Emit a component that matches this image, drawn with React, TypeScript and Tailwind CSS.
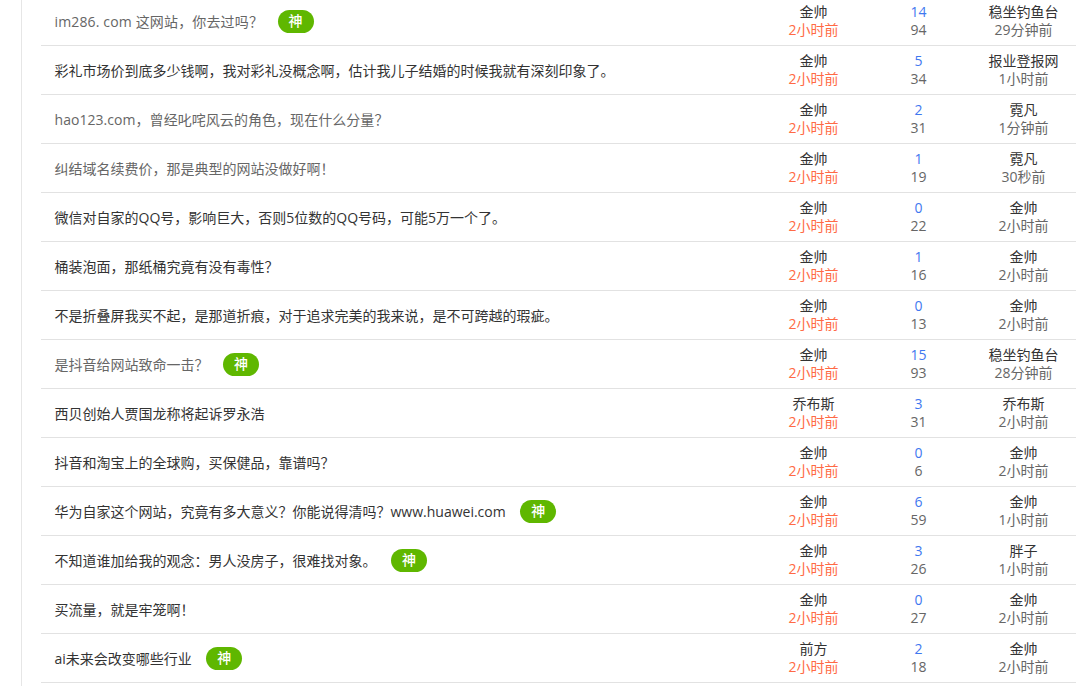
import React from "react";

interface Topic {
  title: string;
  muted?: boolean;
  hot?: boolean;
  spacing?: string;
  author: string;
  replies: number;
  views: number;
  lastUser: string;
  lastTime: string;
}

const topics: Topic[] = [
  { title: "im286. com 这网站，你去过吗？", muted: true, hot: true, spacing: "tracking-[0.15px]", author: "金帅", replies: 14, views: 94, lastUser: "稳坐钓鱼台", lastTime: "29分钟前" },
  { title: "彩礼市场价到底多少钱啊，我对彩礼没概念啊，估计我儿子结婚的时候我就有深刻印象了。", author: "金帅", replies: 5, views: 34, lastUser: "报业登报网", lastTime: "1小时前" },
  { title: "hao123.com，曾经叱咤风云的角色，现在什么分量？", muted: true, spacing: "tracking-[0.05px]", author: "金帅", replies: 2, views: 31, lastUser: "霓凡", lastTime: "1分钟前" },
  { title: "纠结域名续费价，那是典型的网站没做好啊！", muted: true, author: "金帅", replies: 1, views: 19, lastUser: "霓凡", lastTime: "30秒前" },
  { title: "微信对自家的QQ号，影响巨大，否则5位数的QQ号码，可能5万一个了。", author: "金帅", replies: 0, views: 22, lastUser: "金帅", lastTime: "2小时前" },
  { title: "桶装泡面，那纸桶究竟有没有毒性？", author: "金帅", replies: 1, views: 16, lastUser: "金帅", lastTime: "2小时前" },
  { title: "不是折叠屏我买不起，是那道折痕，对于追求完美的我来说，是不可跨越的瑕疵。", author: "金帅", replies: 0, views: 13, lastUser: "金帅", lastTime: "2小时前" },
  { title: "是抖音给网站致命一击？", muted: true, hot: true, author: "金帅", replies: 15, views: 93, lastUser: "稳坐钓鱼台", lastTime: "28分钟前" },
  { title: "西贝创始人贾国龙称将起诉罗永浩", author: "乔布斯", replies: 3, views: 31, lastUser: "乔布斯", lastTime: "2小时前" },
  { title: "抖音和淘宝上的全球购，买保健品，靠谱吗？", author: "金帅", replies: 0, views: 6, lastUser: "金帅", lastTime: "2小时前" },
  { title: "华为自家这个网站，究竟有多大意义？你能说得清吗？www.huawei.com", hot: true, author: "金帅", replies: 6, views: 59, lastUser: "金帅", lastTime: "1小时前" },
  { title: "不知道谁加给我的观念：男人没房子，很难找对象。", hot: true, author: "金帅", replies: 3, views: 26, lastUser: "胖子", lastTime: "1小时前" },
  { title: "买流量，就是牢笼啊！", author: "金帅", replies: 0, views: 27, lastUser: "金帅", lastTime: "2小时前" },
  { title: "ai未来会改变哪些行业", hot: true, author: "前方", replies: 2, views: 18, lastUser: "金帅", lastTime: "2小时前" },
];

const App: React.FC = () => {
  return (
    <div className="h-[686px] overflow-hidden bg-white font-['Open_Sans','Noto_Sans_CJK_SC',sans-serif] text-sm leading-[18px] text-[#333]">
      <div className="ml-[21px] w-[1055px] h-[700px] border-l border-[#e6e6e6] pl-[19px] -mt-[3px]">
        {topics.map((topic, index) => (
          <div key={index} className="h-[49px] flex items-center border-b border-[#e2e2e2]">
            <div className="flex-1 pl-[13.5px] flex items-center">
              <span className={`pt-[2px] ${topic.muted ? "text-[#666]" : "text-[#333]"} ${topic.spacing ?? ""}`}>{topic.title}</span>
              {topic.hot ? (
                <span className="ml-[14.5px] w-9 h-[23px] rounded-full bg-[#5fb700] text-white text-sm font-medium flex items-center justify-center">
                  神
                </span>
              ) : null}
            </div>
            <div className="w-[105px] text-center">
              <div>{topic.author}</div>
              <div className="text-[#ff6a45]">2小时前</div>
            </div>
            <div className="w-[105px] text-center">
              <div className="text-[#3f78f0]">{topic.replies}</div>
              <div className="text-[#666]">{topic.views}</div>
            </div>
            <div className="w-[105px] text-center">
              <div>{topic.lastUser}</div>
              <div className="text-[#666]">{topic.lastTime}</div>
            </div>
          </div>
        ))}
      </div>
    </div>
  );
};

export default App;
